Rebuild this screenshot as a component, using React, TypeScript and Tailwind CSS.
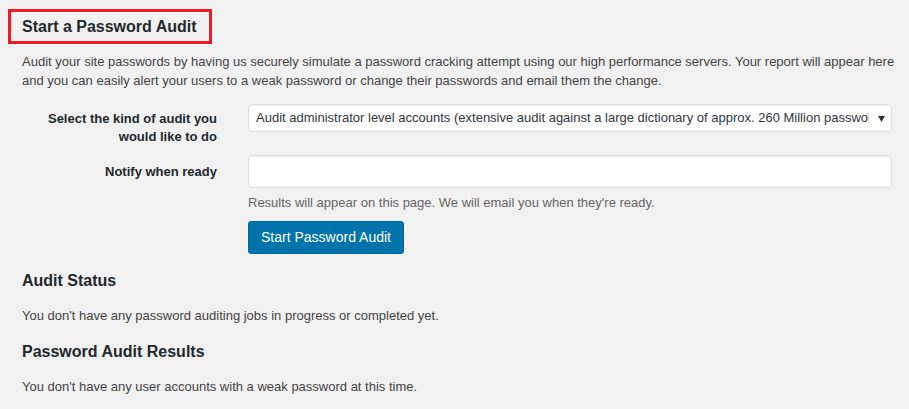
export default function App() {
  return (
    <div className="min-h-screen bg-[#f1f1f1] pl-[22px] pr-[17px] pt-[9px] text-[13px] text-[#444] font-['Liberation_Sans',Arial,sans-serif]">
      <div className="ml-[-14px] inline-block h-[35px] border-[3px] border-[#ed1c24] pl-[11px] pr-[12px]">
        <h2 className="text-[16px] font-bold leading-[29px] text-[#23282d]">Start a Password Audit</h2>
      </div>

      <p className="mt-[8px] leading-[19px]">
        <span className="block whitespace-nowrap">
          Audit your site passwords by having us securely simulate a password cracking attempt using our high performance servers. Your report will appear here
        </span>
        <span className="block whitespace-nowrap">
          and you can easily alert your users to a weak password or change their passwords and email them the change.
        </span>
      </p>

      <div className="mt-[14px] grid grid-cols-[195px_minmax(0,1fr)] gap-x-[31px]">
        <label className="pt-[6px] text-right font-bold leading-[18px] text-[#23282d]">
          Select the kind of audit you would like to do
        </label>
        <div className="relative flex h-[28px] min-w-0 items-center rounded-[4px] border border-[#ddd] bg-white pl-[7px] pr-[22px] text-[#32373c] shadow-[inset_0_1px_2px_rgba(0,0,0,0.07)]">
          <span className="overflow-hidden whitespace-nowrap">
            Audit administrator level accounts (extensive audit against a large dictionary of approx. 260 Million passwords)
          </span>
          <svg className="absolute right-[6px] top-[11px]" width="7" height="6" viewBox="0 0 7 6">
            <path d="M0 0h7L3.5 6z" fill="#333" />
          </svg>
        </div>

        <label className="mt-[9px] pt-[8px] text-right font-bold leading-[18px] text-[#23282d]">
          Notify when ready
        </label>
        <div className="mt-[9px]">
          <div className="h-[33px] rounded-[4px] border border-[#ddd] bg-white shadow-[inset_0_1px_2px_rgba(0,0,0,0.07)]" />
          <p className="mt-[6px] leading-[18px] text-[#666]">
            Results will appear on this page. We will email you when they're ready.
          </p>
          <button className="mt-[9px] h-[33px] rounded-[3px] border border-[#006799] bg-[#0073aa] px-[12px] text-[14px] text-white">
            Start Password Audit
          </button>
        </div>
      </div>

      <h2 className="mt-[16px] text-[16px] font-bold leading-[22px] text-[#23282d]">Audit Status</h2>
      <p className="mt-[14px] leading-[19px]">You don't have any password auditing jobs in progress or completed yet.</p>
      <h2 className="mt-[16px] text-[16px] font-bold leading-[22px] text-[#23282d]">Password Audit Results</h2>
      <p className="mt-[14px] leading-[19px]">You don't have any user accounts with a weak password at this time.</p>
    </div>
  );
}
